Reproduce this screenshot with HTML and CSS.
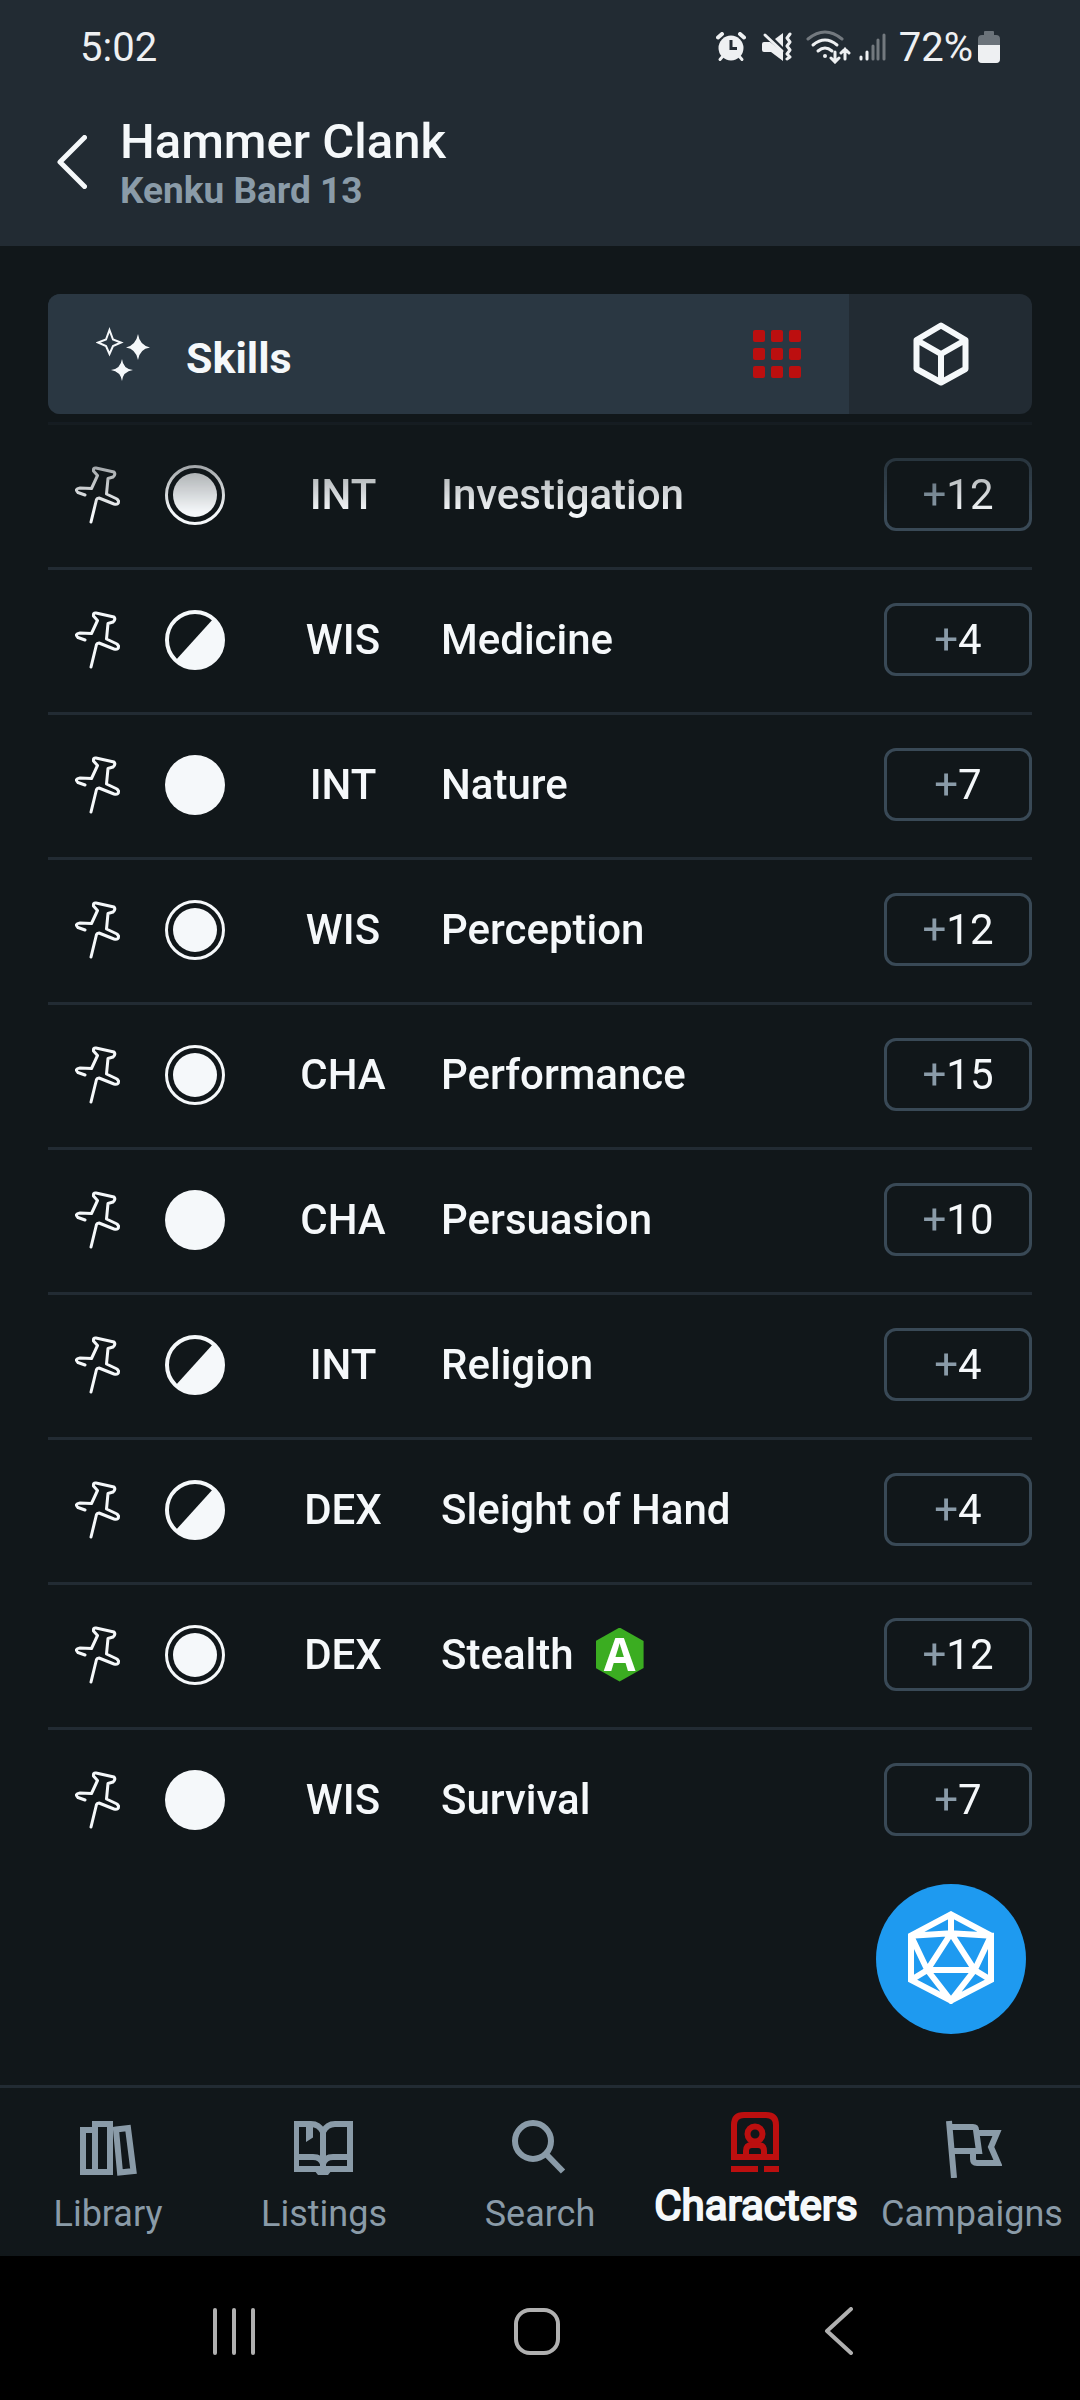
FILE: index.html
```html
<!DOCTYPE html>
<html lang="en">
<head>
<meta charset="utf-8">
<meta name="viewport" content="width=device-width, initial-scale=1">
<title>Hammer Clank – Skills</title>
<link rel="stylesheet" href="styles.css">
</head>
<body>
<svg class="sprite" aria-hidden="true">
  <symbol id="pin" viewBox="0 0 46 58">
    <path d="M16 56 21.500 33.500Q22 32 24 32L39 38Q44 39 43.500 35L42 33 31.500 28 33 12.500 38 11Q41 8.500 39 6L21 2Q18 1.500 18.500 5L22.500 9.500 16.500 22.500 5 22Q-1 23 3 26.500L10 29" fill="none" stroke="currentColor" stroke-width="3" stroke-linecap="round" stroke-linejoin="round"/>
  </symbol>
  <symbol id="full" viewBox="0 0 60 60"><circle cx="30" cy="30" r="30" fill="currentColor"/></symbol>
  <symbol id="expert" viewBox="0 0 60 60">
    <circle cx="30" cy="30" r="28.500" fill="none" stroke="currentColor" stroke-width="3"/>
    <circle cx="30" cy="30" r="22" fill="currentColor"/>
  </symbol>
  <symbol id="half" viewBox="0 0 60 60">
    <circle cx="30" cy="30" r="28" fill="none" stroke="currentColor" stroke-width="4"/>
    <path d="M49 8A29 29 0 0 1 10 51Z" fill="currentColor"/>
  </symbol>
</svg>

<div class="screen">
  <header class="header">
    <div class="status">
      <span class="status-time">5:02</span>
      <div class="status-icons">
        <svg class="alarm" viewBox="0 0 30 30" width="30" height="30" aria-label="Alarm set">
          <g fill="none" stroke="currentColor" stroke-width="4" stroke-linecap="round"><path d="M2 5.500 6 2M28 5.500 24 2"/><path d="M7 24 4 27.500M23 24l3 3.500" stroke-width="3"/></g>
          <circle cx="15" cy="16" r="12.500" fill="currentColor"/>
          <path d="M15 8v8.500h6" fill="none" stroke="#222b33" stroke-width="3"/>
        </svg>
        <svg class="mute" viewBox="0 0 30 30" width="30" height="30" aria-label="Vibrate">
          <path d="M0 12q0-2 2-2h6L21 20v9L9 20H2q-2 0-2-2z" fill="currentColor"/>
          <path d="M13 7 21 1v14z" fill="currentColor"/>
          <path d="M3 3 20 19" stroke="currentColor" stroke-width="3" stroke-linecap="round"/>
          <path d="M28 2 25 6l3 4-3 4 3 4-3 4 3 3-3 2" fill="none" stroke="currentColor" stroke-width="3" stroke-linecap="round" stroke-linejoin="round"/>
        </svg>
        <svg class="wifi" viewBox="0 0 45 34" width="45" height="34" aria-label="Wi-Fi">
          <g fill="none" stroke="currentColor" stroke-width="3" stroke-linecap="round">
            <path d="M2 9Q19-5 36 9" opacity=".4"/><path d="M7 15Q19 5 31 15"/><path d="M12 21q7-6 14 0"/>
            <path d="M29 22v9M25 28l4 4 4-4M39 29V19M35 23l4-4 4 4"/>
          </g>
          <circle cx="19" cy="26" r="2" fill="currentColor"/>
        </svg>
        <svg class="signal" viewBox="0 0 28 30" width="28" height="30" aria-label="Signal">
          <g fill="none" stroke="currentColor" stroke-width="3" stroke-linecap="round"><path d="M2 25v2M8 20v7"/><path d="M14 14v13M19 8v19M25 3v24" opacity=".4"/></g>
        </svg>
        <span class="status-battery">72%</span>
        <svg class="battery" viewBox="0 0 22 32" width="22" height="32" aria-label="Battery">
          <path d="M4 4h2V1q0-1 1-1h8q1 0 1 1v3h2q4 0 4 4v20q0 4-4 4H4q-4 0-4-4V8q0-4 4-4z" fill="#6b737a"/>
          <path d="M0 14h22v14q0 4-4 4H4q-4 0-4-4z" fill="currentColor"/>
        </svg>
      </div>
    </div>
    <div class="title-row">
      <button class="back" type="button" aria-label="Back">
        <svg viewBox="0 0 30 54" width="30" height="54"><path d="M27.500 2.500 3 27 27.500 51.500" fill="none" stroke="currentColor" stroke-width="5" stroke-linecap="round" stroke-linejoin="round"/></svg>
      </button>
      <div>
        <h1 class="title">Hammer Clank</h1>
        <p class="subtitle">Kenku Bard 13</p>
      </div>
    </div>
  </header>

  <main class="main">
    <div class="bar">
      <button class="section" type="button">
        <svg viewBox="0 0 54 54" width="54" height="54" aria-hidden="true">
          <path d="M13.500 3 17 12.500 25 15.500 17 19 13.500 27 10 19 2 15.500 10 12.500z" fill="none" stroke="currentColor" stroke-width="2"/>
          <path d="M42 7Q43.500 18 54 20.500 43.500 22 42 33 40 22 30 20.500 40 18 42 7zM26 32Q27 42 37 43 27 44.500 26 54 24.500 44.500 15 43 24.500 42 26 32z" fill="currentColor"/>
        </svg>
        <span class="section-name">Skills</span>
        <svg class="dots" viewBox="0 0 48 48" width="48" height="48" aria-hidden="true">
          <g fill="currentColor"><rect width="12" height="12" rx="2"/><rect x="18" width="12" height="12" rx="2"/><rect x="36" width="12" height="12" rx="2"/><rect y="18" width="12" height="12" rx="2"/><rect x="18" y="18" width="12" height="12" rx="2"/><rect x="36" y="18" width="12" height="12" rx="2"/><rect y="36" width="12" height="12" rx="2"/><rect x="18" y="36" width="12" height="12" rx="2"/><rect x="36" y="36" width="12" height="12" rx="2"/></g>
        </svg>
      </button>
      <button class="cube" type="button" aria-label="Inventory">
        <svg viewBox="0 0 56 64" width="56" height="64"><path d="M28 3.500 52.500 18v29L28 60.500 3.500 47V18zM3.500 18 28 32 52.500 18M28 32v28" fill="none" stroke="currentColor" stroke-width="6" stroke-linejoin="round"/></svg>
      </button>
    </div>

    <ul class="skills">
      <li class="skill"><button class="pin" type="button" aria-label="Pin Investigation"><svg width="46" height="58"><use href="#pin"/></svg></button><svg class="prof" width="60" height="60"><use href="#expert"/></svg><span class="stat">INT</span><span class="name">Investigation</span><button class="mod" type="button"><span class="sign">+</span>12</button></li>
      <li class="skill"><button class="pin" type="button" aria-label="Pin Medicine"><svg width="46" height="58"><use href="#pin"/></svg></button><svg class="prof" width="60" height="60"><use href="#half"/></svg><span class="stat">WIS</span><span class="name">Medicine</span><button class="mod" type="button"><span class="sign">+</span>4</button></li>
      <li class="skill"><button class="pin" type="button" aria-label="Pin Nature"><svg width="46" height="58"><use href="#pin"/></svg></button><svg class="prof" width="60" height="60"><use href="#full"/></svg><span class="stat">INT</span><span class="name">Nature</span><button class="mod" type="button"><span class="sign">+</span>7</button></li>
      <li class="skill"><button class="pin" type="button" aria-label="Pin Perception"><svg width="46" height="58"><use href="#pin"/></svg></button><svg class="prof" width="60" height="60"><use href="#expert"/></svg><span class="stat">WIS</span><span class="name">Perception</span><button class="mod" type="button"><span class="sign">+</span>12</button></li>
      <li class="skill"><button class="pin" type="button" aria-label="Pin Performance"><svg width="46" height="58"><use href="#pin"/></svg></button><svg class="prof" width="60" height="60"><use href="#expert"/></svg><span class="stat">CHA</span><span class="name">Performance</span><button class="mod" type="button"><span class="sign">+</span>15</button></li>
      <li class="skill"><button class="pin" type="button" aria-label="Pin Persuasion"><svg width="46" height="58"><use href="#pin"/></svg></button><svg class="prof" width="60" height="60"><use href="#full"/></svg><span class="stat">CHA</span><span class="name">Persuasion</span><button class="mod" type="button"><span class="sign">+</span>10</button></li>
      <li class="skill"><button class="pin" type="button" aria-label="Pin Religion"><svg width="46" height="58"><use href="#pin"/></svg></button><svg class="prof" width="60" height="60"><use href="#half"/></svg><span class="stat">INT</span><span class="name">Religion</span><button class="mod" type="button"><span class="sign">+</span>4</button></li>
      <li class="skill"><button class="pin" type="button" aria-label="Pin Sleight of Hand"><svg width="46" height="58"><use href="#pin"/></svg></button><svg class="prof" width="60" height="60"><use href="#half"/></svg><span class="stat">DEX</span><span class="name">Sleight of Hand</span><button class="mod" type="button"><span class="sign">+</span>4</button></li>
      <li class="skill"><button class="pin" type="button" aria-label="Pin Stealth"><svg width="46" height="58"><use href="#pin"/></svg></button><svg class="prof" width="60" height="60"><use href="#expert"/></svg><span class="stat">DEX</span><span class="name">Stealth <span class="advantage">A</span></span><button class="mod" type="button"><span class="sign">+</span>12</button></li>
      <li class="skill"><button class="pin" type="button" aria-label="Pin Survival"><svg width="46" height="58"><use href="#pin"/></svg></button><svg class="prof" width="60" height="60"><use href="#full"/></svg><span class="stat">WIS</span><span class="name">Survival</span><button class="mod" type="button"><span class="sign">+</span>7</button></li>
    </ul>

    <button class="dice" type="button" aria-label="Roll dice">
      <svg viewBox="204 183 258 279" width="86" height="93"><path d="M333 193 453 257V390L333 452 213 390V257ZM333 250 262 360H404ZM333 193V250M213 257 333 250 453 257 404 360 453 390M213 257 262 360 213 390M262 360 333 452 404 360" fill="none" stroke="currentColor" stroke-width="18"/></svg>
    </button>
  </main>

  <nav class="tabs">
    <a class="tab" href="#library">
      <svg viewBox="78 2118 60 60" width="60" height="60"><g fill="none" stroke="currentColor" stroke-width="6"><path d="M83 2130h12v42H83zM95 2124h15v48H95zM116 2129.500l12-1.500 5.500 43-13.500 1.500z"/></g></svg>
      <span>Library</span>
    </a>
    <a class="tab" href="#listings">
      <svg viewBox="294 2118 60 60" width="60" height="60"><path d="M296 2124h15q8 0 12 8 4-8 12-8h15v45h-54zM323 2132v37M296 2157h17q8 0 10 7 2-7 10-7h17" fill="none" stroke="currentColor" stroke-width="6"/><path d="M306 2124h7v13.500l-7 4.500zM314 2170h18l-4 5h-10z" fill="currentColor"/></svg>
      <span>Listings</span>
    </a>
    <a class="tab" href="#search">
      <svg viewBox="510 2118 60 60" width="60" height="60"><circle cx="533" cy="2141" r="18" fill="none" stroke="currentColor" stroke-width="6"/><path d="M546 2154 563 2171.500" stroke="currentColor" stroke-width="6"/></svg>
      <span>Search</span>
    </a>
    <a class="tab active" href="#characters" aria-current="page">
      <svg viewBox="726 2112 60 60" width="60" height="60"><g fill="none" stroke="currentColor" stroke-width="6"><path d="M734 2157v-32q0-10 10-10h22q10 0 10 10v32z"/><circle cx="755" cy="2134" r="7.500"/><path d="M746 2156v-5q0-6 6-6h6q6 0 6 6v5M731 2169h27M764 2169h15"/></g></svg>
      <span>Characters</span>
    </a>
    <a class="tab" href="#campaigns">
      <svg viewBox="942 2118 60 60" width="60" height="60"><path d="M949 2121l5 57M950 2127h23q3 0 3 3l3 21h-27M978 2133h19l-6 14 7 16h-21q-4 0-4-4v-5" fill="none" stroke="currentColor" stroke-width="6"/></svg>
      <span>Campaigns</span>
    </a>
  </nav>

  <div class="system">
    <button type="button" aria-label="Recent apps"><svg viewBox="0 0 48 48" width="48" height="48"><path d="M5 3v43M24 3v43M43 3v43" stroke="currentColor" stroke-width="4" stroke-linecap="round"/></svg></button>
    <button type="button" aria-label="Home"><svg viewBox="0 0 48 48" width="48" height="48"><rect x="3" y="3" width="42" height="43" rx="14" fill="none" stroke="currentColor" stroke-width="4"/></svg></button>
    <button type="button" aria-label="System back"><svg viewBox="0 0 48 48" width="48" height="48"><path d="M36 2 12 24 36 46" fill="none" stroke="currentColor" stroke-width="4" stroke-linecap="round" stroke-linejoin="round"/></svg></button>
  </div>
</div>
</body>
</html>
```

FILE: styles.css
```css
* { box-sizing: border-box; }

body {
  margin: 0;
  background: #11171a;
  color: #f5f8fa;
  font-family: Roboto, "Liberation Sans", sans-serif;
}

svg { display: block; flex: none; }

.sprite { display: none; }

h1, p, ul { margin: 0; padding: 0; }

button {
  padding: 0;
  border: 0;
  background: none;
  color: inherit;
  font: inherit;
}

a { color: inherit; text-decoration: none; }

.screen {
  display: flex;
  flex-direction: column;
  min-height: 100vh;
}

.header { background: #222b33; padding-bottom: 32px; }

.status {
  display: flex;
  justify-content: space-between;
  align-items: center;
  height: 94px;
  padding: 0 80px;
  color: #eef0f2;
  font-size: 40px;
}

.status-icons { display: flex; align-items: center; }
.mute { margin-left: 16px; }
.wifi { margin-left: 14px; }
.signal { margin-left: 8px; }
.status-battery { margin-left: 12px; }
.battery { margin-left: 5px; }

.title-row {
  display: flex;
  align-items: flex-start;
  gap: 33px;
  padding: 22px 57px 0;
}

.back { padding-top: 19px; }

.title { font-size: 49px; font-weight: 500; line-height: 52px; }

.subtitle {
  color: #8a9ba8;
  font-size: 37px;
  font-weight: 700;
  line-height: 46px;
}

.main {
  position: relative;
  flex: 1;
  padding: 48px 48px 210px;
}

.bar {
  display: flex;
  height: 120px;
  overflow: hidden;
  border-radius: 12px;
  background: #222b33;
}

.section {
  display: flex;
  flex: 1;
  align-items: center;
  padding: 0 48px;
  background: #2a3742;
}

.section-name {
  flex: 1;
  padding: 8px 0 0 36px;
  font-size: 43px;
  font-weight: 700;
  text-align: left;
}

.dots { color: #bc0f0f; }

.cube {
  display: flex;
  align-items: center;
  justify-content: center;
  width: 183px;
}

.skills {
  margin-top: 8px;
  list-style: none;
  -webkit-mask-image: linear-gradient(rgba(0, 0, 0, .3), #000 90px);
  mask-image: linear-gradient(rgba(0, 0, 0, .3), #000 90px);
}

.skill {
  display: grid;
  grid-template-columns: 90px 98px 178px 1fr 148px;
  align-items: center;
  height: 145px;
  padding: 0 0 3px 27px;
  border-top: 3px solid #222b33;
  font-size: 42px;
  font-weight: 500;
}

.pin { justify-self: start; }

.stat { padding-right: 18px; text-align: center; }

.name { display: flex; align-items: center; gap: 22px; }

.advantage {
  width: 48px;
  height: 54px;
  background: #3bad21;
  clip-path: polygon(50% 0, 100% 25%, 100% 75%, 50% 100%, 0 75%, 0 25%);
  color: #fff;
  font-family: "Open Sans", sans-serif;
  font-size: 46px;
  font-weight: 700;
  line-height: 50px;
  text-align: center;
}

.mod {
  height: 73px;
  border: 3px solid #394956;
  border-radius: 12px;
  font-weight: 400;
}

.sign { color: #8a9ba8; }

/* Floats over the lower right of the skill list. */
.dice {
  position: absolute;
  right: 54px;
  bottom: 51px;
  display: flex;
  align-items: center;
  justify-content: center;
  width: 150px;
  height: 150px;
  padding-bottom: 3px;
  border-radius: 50%;
  background: #1e9af0;
  color: #fff;
}

.tabs {
  display: grid;
  grid-template-columns: repeat(5, minmax(0, 1fr));
  height: 171px;
  border-top: 3px solid #222b33;
}

.tab {
  display: flex;
  flex-direction: column;
  align-items: center;
  gap: 15px;
  padding-top: 30px;
  color: #8a9ba8;
  font-size: 36px;
  line-height: 42px;
}

.active {
  gap: 10px;
  padding-top: 24px;
  color: #f5f8fa;
  font-size: 42px;
  font-weight: 400;
  line-height: 48px;
  -webkit-text-stroke: 2px currentColor;
}

.active svg { color: #bc0f0f; }

.system {
  display: flex;
  align-items: center;
  justify-content: space-between;
  height: 144px;
  padding: 6px 217px 0 210px;
  background: #000;
  color: #b0b0b0;
}
```
